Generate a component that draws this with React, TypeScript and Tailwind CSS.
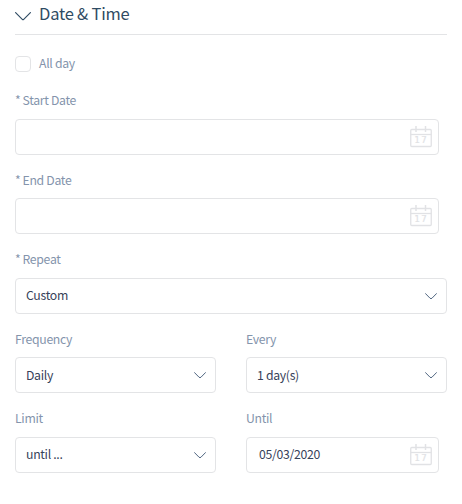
import type { ReactNode } from 'react';

function Chevron({ className }: { className?: string }) {
  return (
    <svg className={className} viewBox="0 0 12 7" fill="none" stroke="currentColor" strokeLinecap="round">
      <path d="M.5.6 5 5.2Q6 6.200 7 5.2L11.5.6" />
    </svg>
  );
}

function SectionChevron() {
  return (
    <svg className="mt-[10px] h-[9px] w-4" viewBox="0 0 16 9" fill="none" stroke="currentColor" strokeWidth="1.15" strokeLinecap="round">
      <path d="M.6.6 7.300 7.300Q8 8 8.700 7.300L15.4.6" />
    </svg>
  );
}

function CalendarIcon() {
  return (
    <svg className="h-[22px] w-[22px] shrink-0 text-[#e1e2e5]" viewBox="0 0 22 22" fill="none" stroke="currentColor">
      <rect x=".75" y="3.5" width="20.5" height="17" rx="1" strokeWidth="1.300" />
      <path d="M.5 8.5h21" strokeWidth="1.300" />
      <path d="M6 0v6M15.500 0v6" strokeWidth="1.500" />
      <text x="4.600" y="17.300" fontSize="8.500" letterSpacing="1.200" fill="currentColor" stroke="currentColor" strokeWidth=".2" fontFamily="DejaVu Sans, sans-serif">17</text>
    </svg>
  );
}

function Field({ label, required, children }: { label: string; required?: boolean; children: ReactNode }) {
  return (
    <div className="flex h-[79.5px] flex-col">
      <div className="-mt-[0.3px] flex h-[27.3px] shrink-0 items-start text-[#8494ac]">
        {required && <span className="w-[7.5px]">*</span>}
        <span>{label}</span>
      </div>
      {children}
    </div>
  );
}

function SelectBox({ value }: { value: string }) {
  return (
    <div className="flex h-9 items-center justify-between rounded-[4px] border border-[#e3e4e6] pr-[9px] pl-[10px] text-[#37425a]">
      <span className="mb-[0.6px]">{value}</span>
      <Chevron className="mt-[0.6px] h-[7px] w-3 text-[#4f6580]" />
    </div>
  );
}

function DateBox({ value }: { value?: string }) {
  return (
    <div className="mr-2 flex h-9 items-center justify-between rounded-[4px] border border-[#e3e4e6] pr-[6px] pl-3 text-[#37425a]">
      <span className="mb-[0.6px]">{value}</span>
      <CalendarIcon />
    </div>
  );
}

export default function App() {
  return (
    <main className="h-[504px] w-[462px] overflow-hidden bg-white px-[15px] font-['Noto_Sans_CJK_SC','Open_Sans',sans-serif] text-[12.25px] leading-[18px] tracking-[-0.31px]">
      <header className="flex h-[35px] items-start border-b border-[#e3e4e6] pt-[2px] text-[#2f4b63]">
        <SectionChevron />
        <h1 className="-mt-px ml-2 text-[16.500px] leading-6 tracking-[-0.22px]">Date &amp; Time</h1>
      </header>
      <div className="mt-[21px] flex h-4 items-center text-[#8494ac]">
        <span className="h-4 w-4 rounded-[4px] border border-[#e3e4e6]" />
        <span className="mb-[2px] ml-2">All day</span>
      </div>
      <section className="pt-[19.75px]">
        <Field label="Start Date" required><DateBox /></Field>
        <Field label="End Date" required><DateBox /></Field>
        <Field label="Repeat" required><SelectBox value="Custom" /></Field>
        <div className="grid grid-cols-[201px_201px] gap-x-[30px]">
          <Field label="Frequency"><SelectBox value="Daily" /></Field>
          <Field label="Every"><SelectBox value="1 day(s)" /></Field>
          <Field label="Limit"><SelectBox value="until ..." /></Field>
          <Field label="Until"><DateBox value="05/03/2020" /></Field>
        </div>
      </section>
    </main>
  );
}
